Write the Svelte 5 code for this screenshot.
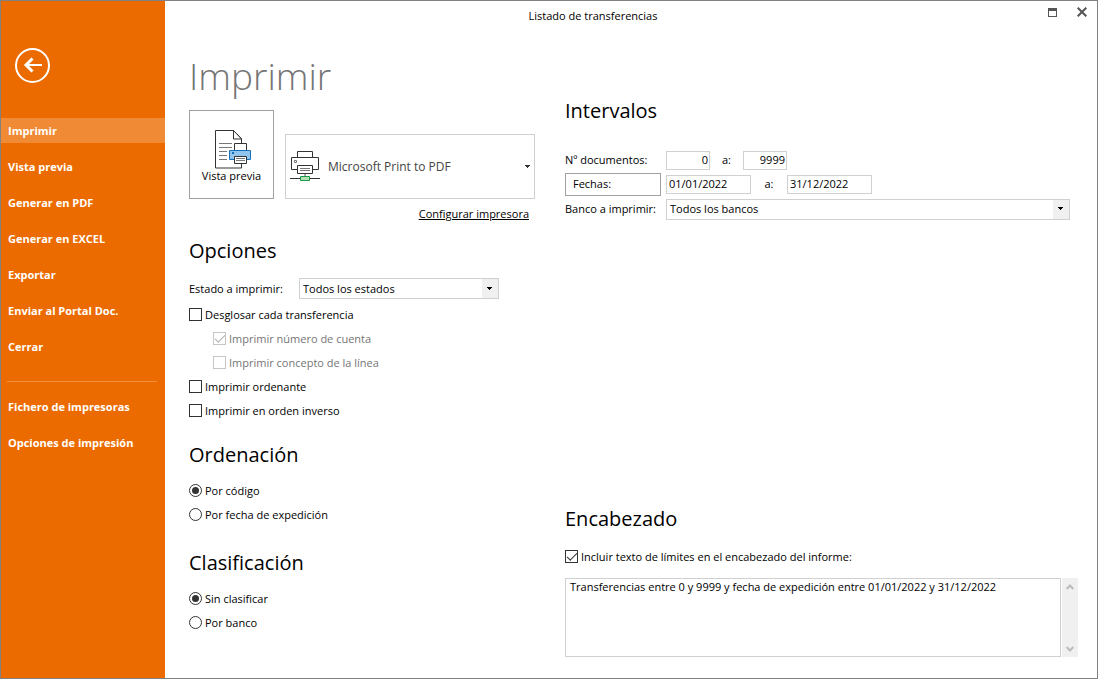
<script lang="ts">
	const menu = [
		'Imprimir',
		'Vista previa',
		'Generar en PDF',
		'Generar en EXCEL',
		'Exportar',
		'Enviar al Portal Doc.',
		'Cerrar'
	];
	const settingsMenu = ['Fichero de impresoras', 'Opciones de impresión'];

	let active = $state('Imprimir');
	let docFrom = $state('0');
	let docTo = $state('9999');
	let dateFrom = $state('01/01/2022');
	let dateTo = $state('31/12/2022');
	let breakdown = $state(false);
	let printAccount = $state(true);
	let printConcept = $state(false);
	let order = $state('codigo');
	let grouping = $state('ninguna');
	let includeLimits = $state(true);

	let headerText = $derived(
		`Transferencias entre ${docFrom} y ${docTo} y fecha de expedición entre ${dateFrom} y ${dateTo}`
	);

	let headerArea: HTMLTextAreaElement;
</script>

{#snippet menuItem(label: string)}
	<button class="menu-item" class:active={active === label} onclick={() => (active = label)}>
		{label}
	</button>
{/snippet}

{#snippet dropArrow()}
	<span class="drop-arrow">
		<svg width="6" height="4" viewBox="0 0 6 4" shape-rendering="crispEdges" aria-hidden="true">
			<path d="M0 0h5v1h-1v1h-1v1h-1v-1h-1v-1h-1z" fill="currentColor" />
		</svg>
	</span>
{/snippet}

<div class="window">
	<nav class="sidebar">
		<button class="back" aria-label="Volver">
			<svg width="36" height="36" viewBox="0 0 36 36" fill="none" stroke="#fff" aria-hidden="true">
				<circle cx="17.5" cy="17.5" r="16.500" stroke-width="2" />
				<path d="M10 17h17" stroke-width="2" />
				<path d="M17.500 10.500l-6.500 6.500 6.500 6.500" stroke-width="3" />
			</svg>
		</button>
		{#each menu as label}
			{@render menuItem(label)}
		{/each}
		<hr />
		{#each settingsMenu as label}
			{@render menuItem(label)}
		{/each}
	</nav>

	<div class="main">
		<header class="titlebar">
			<span class="window-title">Listado de transferencias</span>
			<div class="window-buttons">
				<button aria-label="Maximizar">
					<svg width="9" height="9" viewBox="0 0 9 9" shape-rendering="crispEdges">
						<path d="M0 0h9v9h-9zM1 3v5h7v-5z" fill="#555" fill-rule="evenodd" />
					</svg>
				</button>
				<button aria-label="Cerrar ventana">
					<svg width="10" height="10" viewBox="0 0 10 10">
						<path d="M.7 .7l8.6 8.6M9.3 .7l-8.6 8.6" stroke="#555" stroke-width="2" />
					</svg>
				</button>
			</div>
		</header>

		<div class="columns">
			<section class="left">
				<h1>Imprimir</h1>
				<div class="actions">
					<button class="preview">
						<svg width="39" height="39" viewBox="-2 0 39 39" fill="none" aria-hidden="true">
							<path d="M1.500 .5h18l8 8v29.500h-26z" fill="#fff" stroke="#333" />
							<path d="M19.500 .5v8.500h8z" fill="#fff" stroke="#333" />
							<path d="M5 13.500h13M5 17.500h13M5 21.500h8M5 25.500h8M5 29.500h8" stroke="#777" />
							<path d="M20.500 20.500v-7h12v7" fill="#fff" stroke="#333" />
							<path d="M15.500 20.500h21v9h-21z" fill="#92c5ee" stroke="#1470b8" />
							<path d="M18 22h2v2h-2z" fill="#1470b8" />
							<path d="M20.500 26.500h12v7h-12z" fill="#fff" stroke="#333" />
							<path d="M22 28.500h9M22 30.500h9" stroke="#777" />
						</svg>
						Vista previa
					</button>
					<button class="printer">
						<svg width="30" height="31" viewBox="0 0 30 31" fill="none" aria-hidden="true">
							<path d="M7.500 6.500v-6h15v6" fill="#fff" stroke="#333" />
							<path d="M1.500 6.500h27v12h-27z" fill="#fff" stroke="#333" />
							<path d="M4.500 9.500h2v2h-2z" stroke="#777" />
							<path d="M7.500 14.500h15v8h-15z" fill="#fff" stroke="#333" />
							<path d="M10 17.500h10M10 19.500h10" stroke="#777" />
							<path d="M15 23v3" stroke="#aaa" stroke-width="2" />
							<path d="M0 27.500h30" stroke="#333" />
							<path d="M10.500 25.500h9v4h-9z" fill="#b5dfb5" stroke="#159a45" />
						</svg>
						<span class="printer-name">Microsoft Print to PDF</span>
						<svg width="5" height="3" viewBox="0 0 5 3" shape-rendering="crispEdges" aria-hidden="true">
							<path d="M0 0h5v1h-1v1h-1v1h-1v-1h-1v-1h-1z" fill="#333" />
						</svg>
					</button>
				</div>
				<a class="configure" href="#configurar">Configurar impresora</a>

				<h2>Opciones</h2>
				<div class="state-row">
					<label for="estado">Estado a imprimir:</label>
					<div class="select">
						<select id="estado">
							<option>Todos los estados</option>
						</select>
						{@render dropArrow()}
					</div>
				</div>
				<label class="check"><input type="checkbox" bind:checked={breakdown} />Desglosar cada transferencia</label>
				<label class="check nested" class:disabled={!breakdown}>
					<input type="checkbox" bind:checked={printAccount} disabled={!breakdown} />Imprimir número de cuenta
				</label>
				<label class="check nested" class:disabled={!breakdown}>
					<input type="checkbox" bind:checked={printConcept} disabled={!breakdown} />Imprimir concepto de la línea
				</label>
				<label class="check"><input type="checkbox" />Imprimir ordenante</label>
				<label class="check"><input type="checkbox" />Imprimir en orden inverso</label>

				<h2>Ordenación</h2>
				<label class="check"><input type="radio" value="codigo" bind:group={order} />Por código</label>
				<label class="check"><input type="radio" value="fecha" bind:group={order} />Por fecha de expedición</label>

				<h2 class="grouping">Clasificación</h2>
				<label class="check"><input type="radio" value="ninguna" bind:group={grouping} />Sin clasificar</label>
				<label class="check"><input type="radio" value="banco" bind:group={grouping} />Por banco</label>
			</section>

			<div class="right">
				<section class="ranges">
					<h2>Intervalos</h2>
					<div class="range-row">
						<label class="range-label" for="doc-desde">Nº documentos:</label>
						<input id="doc-desde" class="field number" bind:value={docFrom} />
						<label class="to" for="doc-hasta">a:</label>
						<input id="doc-hasta" class="field number" bind:value={docTo} />
					</div>
					<div class="range-row">
						<button class="dates">Fechas:</button>
						<input class="field" aria-label="Fecha desde" bind:value={dateFrom} />
						<label class="to wide" for="fecha-hasta">a:</label>
						<input id="fecha-hasta" class="field" bind:value={dateTo} />
					</div>
					<div class="range-row bank">
						<label class="range-label" for="banco">Banco a imprimir:</label>
						<div class="select">
							<select id="banco">
								<option>Todos los bancos</option>
							</select>
							{@render dropArrow()}
						</div>
					</div>
				</section>

				<section class="report-header">
					<h2>Encabezado</h2>
					<label class="check">
						<input type="checkbox" bind:checked={includeLimits} />Incluir texto de límites en el encabezado del informe:
					</label>
					<div class="header-text">
						<textarea aria-label="Texto del encabezado" bind:this={headerArea} value={headerText}></textarea>
						<div class="scroll">
							<button aria-label="Subir" onclick={() => headerArea.scrollBy(0, -16)}>
								<svg width="8" height="6" viewBox="0 0 8 6" fill="none" stroke="#bbb" stroke-width="2">
									<path d="M.7 5l3.300-3.500 3.300 3.500" />
								</svg>
							</button>
							<button aria-label="Bajar" onclick={() => headerArea.scrollBy(0, 16)}>
								<svg width="8" height="6" viewBox="0 0 8 6" fill="none" stroke="#bbb" stroke-width="2">
									<path d="M.7 1l3.300 3.500 3.300-3.500" />
								</svg>
							</button>
						</div>
					</div>
				</section>
			</div>
		</div>
	</div>
</div>

<style>
	:global(body) {
		margin: 0;
	}

	.window {
		display: flex;
		min-height: 100vh;
		box-sizing: border-box;
		border: 1px solid #828282;
		background: #fff;
		color: #000;
		font: 11px/16px 'Open Sans', 'Noto Sans', sans-serif;
	}

	button,
	input,
	select,
	textarea {
		box-sizing: border-box;
		margin: 0;
		padding: 0;
		border: 0;
		border-radius: 0;
		background: none;
		color: inherit;
		font: inherit;
	}

	svg {
		display: block;
		flex: none;
	}

	.sidebar {
		flex: none;
		display: flex;
		flex-direction: column;
		width: 164px;
		background: #eb6b00;
		color: #fff;
	}

	.back {
		width: 36px;
		margin: 47px 0 34px 14px;
	}

	.menu-item {
		height: 25px;
		margin-bottom: 11px;
		padding: 0 7px;
		text-align: left;
		font-weight: 700;
	}

	.menu-item.active {
		background: #f08a35;
	}

	.sidebar hr {
		width: 150px;
		height: 1px;
		margin: 11px 0 12px 6px;
		border: 0;
		background: #f08f3f;
	}

	.main {
		flex: 1;
		display: flex;
		flex-direction: column;
		min-width: 0;
	}

	.titlebar {
		display: flex;
		align-items: center;
		height: 30px;
	}

	.window-title {
		flex: 1;
		text-align: center;
	}

	.window-buttons {
		display: flex;
		align-self: flex-start;
		gap: 10px;
		width: 76px;
		justify-content: flex-end;
		padding: 1px 5px 0 0;
		box-sizing: border-box;
	}

	.window-buttons button {
		display: grid;
		place-items: center;
		width: 20px;
		height: 20px;
	}

	.columns {
		flex: 1;
		display: flex;
		gap: 30px;
		padding: 21px 19px 21px 24px;
	}

	.left {
		flex: none;
		display: flex;
		flex-direction: column;
		width: 346px;
	}

	.right {
		flex: 1;
		display: flex;
		flex-direction: column;
		justify-content: space-between;
		min-width: 0;
	}

	h1 {
		margin: 0 0 10px;
		color: #757575;
		font-size: 37px;
		font-weight: 300;
		line-height: 48px;
	}

	h2 {
		margin: 0 0 8px;
		font-size: 20px;
		font-weight: 400;
		line-height: 32px;
	}

	.check + h2 {
		margin-top: 16px;
	}

	.check + h2.grouping {
		margin-top: 20px;
	}

	.actions {
		display: flex;
		align-items: flex-end;
		gap: 11px;
	}

	.preview {
		display: flex;
		flex-direction: column;
		align-items: center;
		justify-content: center;
		width: 85px;
		height: 89px;
		padding-top: 4px;
		border: 1px solid #a0a0a0;
		line-height: 14px;
	}

	.printer {
		flex: 1;
		display: flex;
		align-items: center;
		height: 65px;
		padding: 0 4px;
		border: 1px solid #d0d0d0;
		color: #444;
		font-size: 12px;
		text-align: left;
	}

	.printer-name {
		flex: 1;
		margin-left: 8px;
	}

	.configure {
		align-self: flex-end;
		margin: 7px 6px 13px 0;
		color: #000;
	}

	.state-row {
		display: flex;
		align-items: center;
		justify-content: space-between;
		width: 310px;
		margin: 3px 0 4px;
	}

	.select {
		display: grid;
		width: 200px;
	}

	.select select {
		grid-area: 1 / 1;
		width: 100%;
		height: 21px;
		padding: 0 20px 0 3px;
		border: 1px solid #d0d0d0;
		appearance: none;
	}

	.drop-arrow {
		grid-area: 1 / 1;
		justify-self: end;
		display: grid;
		place-items: center;
		width: 16px;
		margin: 1px;
		background: #f0f0f0;
		pointer-events: none;
	}

	.check {
		display: flex;
		align-items: center;
		gap: 3px;
		height: 24px;
		white-space: nowrap;
	}

	.check.nested {
		margin-left: 24px;
	}

	.check.disabled {
		color: #757575;
	}

	.check input {
		flex: none;
		display: grid;
		place-items: center;
		width: 13px;
		height: 13px;
		margin-bottom: 2px;
		border: 1px solid #333;
		color: #333;
		appearance: none;
	}

	.check input:disabled {
		border-color: #c6c6c6;
		color: #b0b0b0;
	}

	.check input[type='radio'] {
		border-radius: 50%;
	}

	.check input[type='radio']:checked::after {
		content: '';
		width: 7px;
		height: 7px;
		border-radius: 50%;
		background: currentColor;
	}

	.check input[type='checkbox']:checked::after {
		content: '';
		width: 10px;
		height: 5px;
		box-sizing: border-box;
		margin-bottom: 2px;
		border: solid currentColor;
		border-width: 0 0 1px 1px;
		transform: rotate(-45deg);
	}

	.ranges {
		padding: 43px 8px 0 0;
	}

	.ranges h2 {
		margin-bottom: 21px;
	}

	.range-row {
		display: flex;
		align-items: center;
		height: 24px;
	}

	.range-row.bank {
		margin-top: 1px;
	}

	.range-label {
		width: 101px;
	}

	.dates {
		width: 96px;
		height: 23px;
		margin-right: 5px;
		padding: 0 7px;
		border: 1px solid #a0a0a0;
		text-align: left;
	}

	.field {
		width: 85px;
		height: 19px;
		padding: 0 2px 2px;
		border: 1px solid #d0d0d0;
	}

	.field.number {
		width: 44px;
		padding-right: 1px;
		text-align: right;
	}

	.to {
		width: 33px;
		text-align: center;
	}

	.to.wide {
		width: 36px;
	}

	.range-row.bank .select {
		flex: 1;
	}

	.report-header h2 {
		margin-bottom: 10px;
	}

	.header-text {
		display: flex;
		gap: 1px;
		margin-top: 9px;
	}

	textarea {
		flex: 1;
		min-width: 0;
		height: 79px;
		padding: 0 4px;
		border: 1px solid #d0d0d0;
		overflow: hidden;
		resize: none;
	}

	.scroll {
		display: flex;
		flex-direction: column;
		justify-content: space-between;
		width: 16px;
		background: #f0f0f0;
	}

	.scroll button {
		display: grid;
		place-items: center;
		height: 17px;
	}
</style>
